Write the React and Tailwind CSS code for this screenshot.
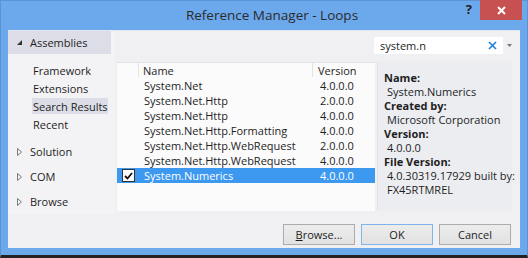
import React from 'react';

const rows = [
  { name: 'System.Net', version: '4.0.0.0' },
  { name: 'System.Net.Http', version: '2.0.0.0' },
  { name: 'System.Net.Http', version: '4.0.0.0' },
  { name: 'System.Net.Http.Formatting', version: '4.0.0.0' },
  { name: 'System.Net.Http.WebRequest', version: '2.0.0.0' },
  { name: 'System.Net.Http.WebRequest', version: '4.0.0.0' },
  { name: 'System.Numerics', version: '4.0.0.0', checked: true },
];

const font = { fontFamily: '"Open Sans", "Noto Sans", sans-serif' };

const Collapsed = ({ label }) => (
  <div className="flex items-center h-[25px] pl-[9px] gap-[8px]">
    <svg width="5" height="8" viewBox="0 0 5 8">
      <path d="M0.5 0.5 L4.5 4 L0.5 7.5 Z" fill="none" stroke="#7a7a7a" strokeWidth="1" />
    </svg>
    <span>{label}</span>
  </div>
);

const Button = ({ children, primary }) => (
  <button
    className={`w-[72px] h-[21px] text-[11px] text-[#1e1e1e] bg-gradient-to-b from-[#ececec] to-[#e2e2e2] border ${
      primary ? 'border-[#7eb4ea]' : 'border-[#acacac]'
    }`}
  >
    {children}
  </button>
);

export default function App() {
  return (
    <div
      className="w-[528px] h-[258px] bg-[#6ca8ec] border border-[#5a93d6] border-b-[3px] border-b-[#222] flex flex-col text-[11px] text-[#1e1e1e] leading-none whitespace-nowrap"
      style={font}
    >
      {/* title bar */}
      <div className="h-[29px] relative flex items-center justify-center">
        <span className="text-[13.5px] text-[#2b2b2b] ml-[16px]">Reference Manager - Loops</span>
        <div className="absolute right-[5px] top-[-1px] flex items-start">
          <span className="text-[13px] font-bold text-[#222] mt-[3px] mr-[8px]">?</span>
          <div className="w-[42px] h-[20px] bg-[#c75050] flex items-center justify-center">
            <svg width="9" height="9" viewBox="0 0 9 9">
              <path d="M1 1 L8 8 M8 1 L1 8" stroke="#fff" strokeWidth="2" />
            </svg>
          </div>
        </div>
      </div>

      {/* client area */}
      <div className="mx-[7px] mb-[7px] flex-1 bg-[#f0f0f3] border-t border-[#dfe7f3] flex flex-col">
        <div className="flex h-[183px]">
          {/* left nav */}
          <div className="w-[107px] bg-[#f3f3f5] flex flex-col">
            <div className="w-[103px] h-[24px] bg-[#dcdde6] flex items-center pl-[9px] gap-[8px]">
              <svg width="5" height="5" viewBox="0 0 5 5">
                <path d="M5 0 L5 5 L0 5 Z" fill="#333" />
              </svg>
              <span>Assemblies</span>
            </div>
            <div className="flex flex-col pl-[24px] pt-[7px]">
              <div className="h-[18px] flex items-center px-[1px]">Framework</div>
              <div className="h-[18px] flex items-center px-[1px]">Extensions</div>
              <div className="h-[16px] my-[1px] flex items-center px-[1px] bg-[#dcdde6] w-[76px]">Search Results</div>
              <div className="h-[18px] flex items-center px-[1px]">Recent</div>
            </div>
            <div className="flex flex-col mt-[6px]">
              <Collapsed label="Solution" />
              <Collapsed label="COM" />
              <Collapsed label="Browse" />
            </div>
          </div>

          {/* main */}
          <div className="flex-1 flex flex-col">
            <div className="h-[30px] flex items-start justify-end pt-[6px] pr-[4px]">
              <div className="w-[129px] h-[17px] bg-white flex items-center justify-between pl-[6px] pr-[6px]">
                <span>system.n</span>
                <svg width="9" height="9" viewBox="0 0 9 9">
                  <path d="M1 1 L8 8 M8 1 L1 8" stroke="#1e7fd8" strokeWidth="1.6" />
                </svg>
              </div>
              <div className="w-[13px] flex justify-center pt-[7px]">
                <svg width="5" height="3" viewBox="0 0 5 3">
                  <path d="M0 0 L5 0 L2.5 3 Z" fill="#777" />
                </svg>
              </div>
            </div>
            <div className="flex flex-1">
              {/* list */}
              <div className="ml-[2px] mt-[1px] w-[258px] h-[149px] bg-[#fbfbfc] flex flex-col">
                <div className="h-[15px] flex border-t border-[#e3e3e6]">
                  <div className="w-[22px] border-r border-[#e3e3e6]" />
                  <div className="w-[174px] border-r border-[#e3e3e6] pl-[4px] flex items-center">Name</div>
                  <div className="flex-1 pl-[5px] flex items-center">Version</div>
                </div>
                <div className="flex flex-col pt-[1px]">
                  {rows.map((r, i) => (
                    <div
                      key={i}
                      className={`h-[15px] flex items-center ${r.checked ? 'bg-[#3d98f0] text-white' : ''}`}
                    >
                      <div className="w-[23px] flex justify-center">
                        {r.checked && (
                          <div className="w-[13px] h-[13px] bg-white border border-[#333] flex items-center justify-center">
                            <svg width="9" height="8" viewBox="0 0 9 8">
                              <path d="M1 4 L3.5 6.5 L8 1" fill="none" stroke="#111" strokeWidth="1.8" />
                            </svg>
                          </div>
                        )}
                      </div>
                      <div className="w-[174px] pl-[4px]">{r.name}</div>
                      <div className="flex-1 pl-[6px]">{r.version}</div>
                    </div>
                  ))}
                </div>
              </div>
              {/* details */}
              <div className="ml-[2px] w-[135px] h-[150px] bg-[#ecedf1] border-l border-[#e2e3e8] pl-[6px] pt-[11px] flex flex-col">
                <div className="h-[14px] font-bold">Name:</div>
                <div className="h-[14px] pl-[3px]">System.Numerics</div>
                <div className="h-[14px] font-bold">Created by:</div>
                <div className="h-[14px] pl-[3px]">Microsoft Corporation</div>
                <div className="h-[14px] font-bold">Version:</div>
                <div className="h-[14px] pl-[3px]">4.0.0.0</div>
                <div className="h-[14px] font-bold">File Version:</div>
                <div className="h-[14px] pl-[3px]">4.0.30319.17929 built by:</div>
                <div className="h-[14px] pl-[3px]">FX45RTMREL</div>
              </div>
            </div>
          </div>
        </div>

        {/* buttons */}
        <div className="flex justify-end gap-[6px] pr-[9px] pt-[10px]">
          <Button>
            <span className="underline">B</span>rowse...
          </Button>
          <Button primary>OK</Button>
          <Button>Cancel</Button>
        </div>
      </div>
    </div>
  );
}
